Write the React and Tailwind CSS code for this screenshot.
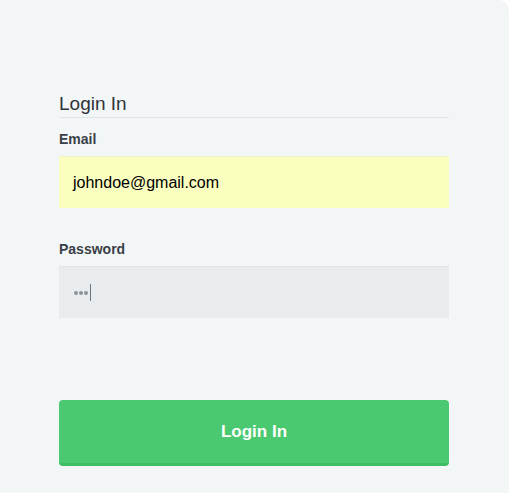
import React from 'react';

function Field({ label, children, className = '' }) {
  return (
    <div className={className}>
      <label className="block text-[14px] leading-[16px] font-bold text-[#3a3f47] mb-[9px]">{label}</label>
      {children}
    </div>
  );
}

export default function App() {
  return (
    <div className="min-h-[493px] bg-white font-['Liberation_Sans',Arial,sans-serif]">
      <div className="w-[509px] h-[493px] bg-[#f3f6f7] rounded-tr-[10px] pl-[59px] pr-[60px] pt-[92px]">
        {/* Title */}
        <h2 className="text-[19px] leading-[24px] text-[#2f3338] pb-[1px] border-b border-[#e1e5e8]">Login In</h2>

        <Field label="Email" className="mt-[13px]">
          <div className="h-[52px] bg-[#fafebe] border-t border-[#f1f4c4] flex items-center pl-[14px] text-[16px] text-black">
            johndoe@gmail.com
          </div>
        </Field>

        <Field label="Password" className="mt-[33px]">
          <div className="h-[52px] bg-[#e8ecee] border-t border-[#e0e4e6] flex items-center pl-[15px]">
            <span className="w-[4px] h-[4px] rounded-full bg-[#8c949b] mr-[1px]" />
            <span className="w-[4px] h-[4px] rounded-full bg-[#8c949b] mr-[1px]" />
            <span className="w-[4px] h-[4px] rounded-full bg-[#8c949b] mr-[2px]" />
            <span className="w-px h-[17px] bg-[#6f757b]" />
          </div>
        </Field>

        <button className="mt-[82px] w-full h-[66px] rounded-[4px] bg-[#4bc971] border-b-[3px] border-[#3fbd63] text-white text-[17px] font-bold">
          Login In
        </button>
      </div>
    </div>
  );
}
